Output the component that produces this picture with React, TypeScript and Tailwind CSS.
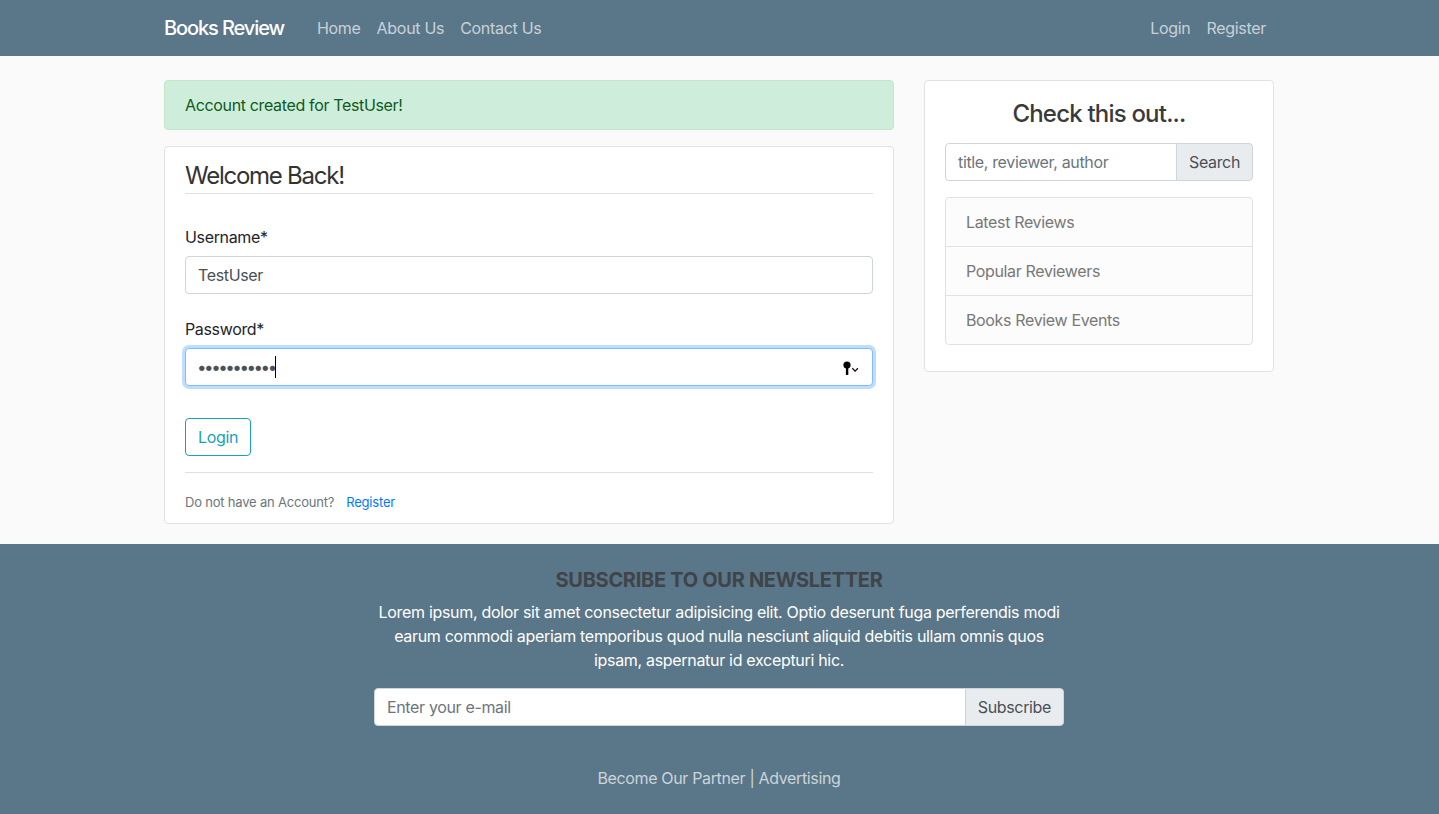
import { Fragment } from "react";

const navLink = "text-[rgba(255,255,255,0.68)] text-base leading-6 tracking-[-0.3px] px-2";
const sideLinks = ["Latest Reviews", "Popular Reviewers", "Books Review Events"];

const KeyIcon = () => (
  <svg width="17" height="15" viewBox="0 0 17 15" fill="none">
    <circle cx="4" cy="4" r="3.6" fill="#000" />
    <path d="M2.9 6v8h1.7l1.2-1.1-.9-.9.9-.9-.9-.8.4-.6V6z" fill="#000" />
    <path d="M9.3 7.3l2.8 2.8 2.8-2.8" stroke="#111" strokeWidth="1.3" />
  </svg>
);

export default function App() {
  return (
    <div className="min-h-[814px] bg-[#fafafa] font-['Inter',sans-serif] text-base leading-6 tracking-[-0.35px] text-[#212529]">
      <header className="h-14 bg-[#5a7689]">
        <nav className="mx-auto flex h-14 w-[1141px] items-center pl-[15px] pr-[16px]">
          <a className="mr-[25px] text-xl font-medium leading-[30px] tracking-[-1.1px] text-white">Books Review</a>
          <a className={navLink}>Home</a>
          <a className={navLink}>About Us</a>
          <a className={navLink}>Contact Us</a>
          <div className="ml-auto flex">
            <a className={navLink}>Login</a>
            <a className={navLink}>Register</a>
          </div>
        </nav>
      </header>

      <main className="mx-auto flex w-[1141px] pt-6">
        <div className="w-[760px] px-[15px]">
          <div className="mb-4 h-[50px] rounded border border-[#c3e6cb] bg-[#ceeedb] px-5 py-3 text-[#0f5a1e]">
            Account created for TestUser!
          </div>
          <div className="h-[378px] rounded border border-[#dee2e6] bg-white px-5 pt-3">
            <h2 className="border-b border-[#e0e0e0] text-2xl leading-[34px] tracking-[-1.25px] text-[#333]">Welcome Back!</h2>
            <label className="mt-[31px] block">Username*</label>
            <input
              readOnly
              value="TestUser"
              className="mt-[7px] block h-[38px] w-full rounded border border-[#ced4da] bg-white px-3 text-[#495057] outline-none"
            />
            <label className="mt-[23px] block">Password*</label>
            <div className="mt-[7px] flex h-[38px] items-center rounded border border-[#80bdff] bg-white pl-3 pr-[12px] text-[#495057] shadow-[0_0_0_3px_rgba(0,123,255,0.25)]">
              <span className="-ml-px text-[17px] tracking-[-2.5px]">•••••••••••</span>
              <span className="h-[22px] w-px bg-black" />
              <span className="ml-auto flex translate-y-[1px]">
                <KeyIcon />
              </span>
            </div>
            <button className="mt-8 block h-[38px] rounded border border-[#17a2b8] px-3 text-[#17a2b8]">Login</button>
            <div className="mt-4 border-t border-[#e0e0e0] pt-[19px] text-[13px] leading-5 tracking-[-0.2px] text-[#6c757d]">
              Do not have an Account?<a className="ml-3 text-[#007bff]">Register</a>
            </div>
          </div>
        </div>

        <aside className="w-[380px] px-[15px]">
          <div className="h-[292px] rounded border border-[#dee2e6] bg-white px-5 pt-4">
            <h3 className="text-center text-2xl font-medium leading-[34px] tracking-[-0.8px] text-[#3a3a3a]">Check this out...</h3>
            <div className="mt-3 flex h-[38px]">
              <input
                placeholder="title, reviewer, author"
                className="w-0 flex-1 rounded-l border border-[#ced4da] bg-white px-3 text-[#495057] outline-none placeholder:text-[#6c757d]"
              />
              <button className="-ml-px rounded-r border border-[#ced4da] bg-[#e9ecef] px-3 text-[#495057]">Search</button>
            </div>
            <div className="mt-4 rounded border border-[#dee2e6] bg-[#fcfcfc]">
              {sideLinks.map((l, i) => (
                <Fragment key={l}>
                  {i > 0 && <div className="border-t border-[#dee2e6]" />}
                  <a className="block h-12 px-5 py-3 text-[#787878]">{l}</a>
                </Fragment>
              ))}
            </div>
          </div>
        </aside>
      </main>

      <footer className="mt-5 flex h-[270px] flex-col items-center bg-[#5a7689] pr-px pt-6">
        <h4 className="text-xl font-bold leading-6 tracking-[-0.3px] text-[#404448]">SUBSCRIBE TO OUR NEWSLETTER</h4>
        <p className="mt-2 w-[690px] text-center tracking-[-0.31px] text-white">
          Lorem ipsum, dolor sit amet consectetur adipisicing elit. Optio deserunt fuga perferendis modi earum commodi aperiam temporibus quod nulla nesciunt aliquid debitis ullam omnis quos ipsam, aspernatur id excepturi hic.
        </p>
        <div className="mt-4 flex h-[38px] w-[690px]">
          <input
            placeholder="Enter your e-mail"
            className="w-0 flex-1 rounded-l border border-[#ced4da] bg-white px-3 text-[#495057] outline-none placeholder:text-[#6c757d]"
          />
          <button className="-ml-px rounded-r border border-[#ced4da] bg-[#e9ecef] px-3 text-[#495057]">Subscribe</button>
        </div>
        <div className="mt-10 text-[rgba(255,255,255,0.7)]">
          <a>Become Our Partner</a> | <a>Advertising</a>
        </div>
      </footer>
    </div>
  );
}
